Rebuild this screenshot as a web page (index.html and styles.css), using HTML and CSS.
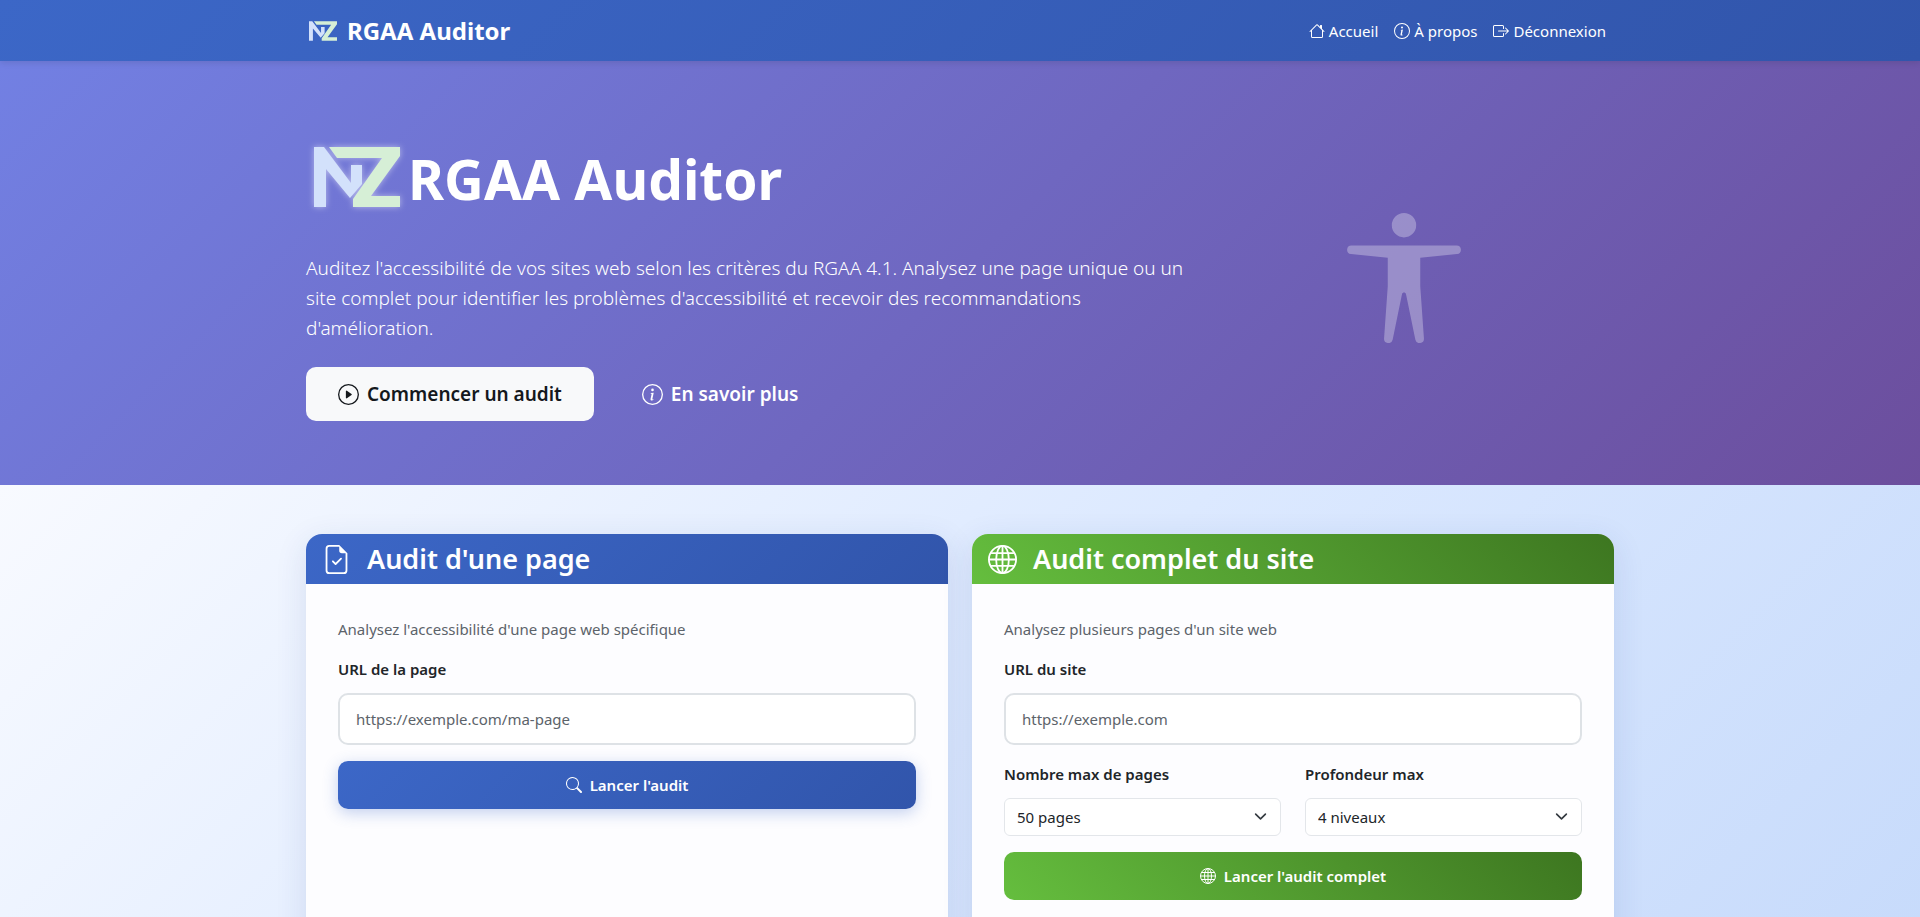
FILE: index.html
```html
<!DOCTYPE html>
<html lang="fr">
<head>
<meta charset="utf-8">
<title>RGAA Auditor</title>
<meta name="viewport" content="width=device-width, initial-scale=1">
<link rel="stylesheet" href="styles.css">
</head>
<body>
<svg class="sprite" aria-hidden="true">
  <symbol id="house" viewBox="0 0 16 16"><path d="M8.707 1.5a1 1 0 0 0-1.414 0L.646 8.146a.5.5 0 0 0 .708.708L2 8.207V13.5A1.5 1.5 0 0 0 3.5 15h9a1.5 1.5 0 0 0 1.5-1.5V8.207l.646.647a.5.5 0 0 0 .708-.708L13 5.793V2.5a.5.5 0 0 0-.5-.5h-1a.5.5 0 0 0-.5.5v1.293zM13 7.207V13.5a.5.5 0 0 1-.5.5h-9a.5.5 0 0 1-.5-.5V7.207l5-5z"/></symbol>
  <symbol id="info" viewBox="0 0 16 16"><path d="M8 15A7 7 0 1 1 8 1a7 7 0 0 1 0 14m0 1A8 8 0 1 0 8 0a8 8 0 0 0 0 16"/><path d="m8.93 6.588-2.29.287-.082.38.45.083c.294.07.352.176.288.469l-.738 3.468c-.194.897.105 1.319.808 1.319.545 0 1.178-.252 1.465-.598l.088-.416c-.2.176-.492.246-.686.246-.275 0-.375-.193-.304-.533zM9 4.5a1 1 0 1 1-2 0 1 1 0 0 1 2 0"/></symbol>
  <symbol id="logout" viewBox="0 0 16 16"><path d="M10 12.5a.5.5 0 0 1-.5.5h-8a.5.5 0 0 1-.5-.5v-9a.5.5 0 0 1 .5-.5h8a.5.5 0 0 1 .5.5v2a.5.5 0 0 0 1 0v-2A1.5 1.5 0 0 0 9.5 2h-8A1.5 1.5 0 0 0 0 3.5v9A1.5 1.5 0 0 0 1.5 14h8a1.5 1.5 0 0 0 1.5-1.5v-2a.5.5 0 0 0-1 0z"/><path d="M15.854 8.354a.5.5 0 0 0 0-.708l-3-3a.5.5 0 0 0-.708.708L14.293 7.5H5.5a.5.5 0 0 0 0 1h8.793l-2.147 2.146a.5.5 0 0 0 .708.708z"/></symbol>
  <symbol id="play" viewBox="0 0 16 16"><path d="M8 15A7 7 0 1 1 8 1a7 7 0 0 1 0 14m0 1A8 8 0 1 0 8 0a8 8 0 0 0 0 16"/><path d="M6.271 5.055a.5.5 0 0 1 .52.038l3.5 2.5a.5.5 0 0 1 0 .814l-3.5 2.5A.5.5 0 0 1 6 10.5v-5a.5.5 0 0 1 .271-.445"/></symbol>
  <symbol id="search" viewBox="0 0 16 16"><path d="M11.742 10.344a6.5 6.5 0 1 0-1.397 1.398h-.001q.044.06.098.115l3.85 3.85a1 1 0 0 0 1.415-1.414l-3.85-3.85a1 1 0 0 0-.115-.1zM12 6.5a5.5 5.5 0 1 1-11 0 5.5 5.5 0 0 1 11 0"/></symbol>
  <symbol id="file-check" viewBox="0 0 16 16"><path d="M10.854 7.854a.5.5 0 0 0-.708-.708L7.5 9.793 6.354 8.646a.5.5 0 1 0-.708.708l1.5 1.5a.5.5 0 0 0 .708 0z"/><path d="M14 14V4.5L9.5 0H4a2 2 0 0 0-2 2v12a2 2 0 0 0 2 2h8a2 2 0 0 0 2-2M9.5 3A1.5 1.5 0 0 0 11 4.5h2V14a1 1 0 0 1-1 1H4a1 1 0 0 1-1-1V2a1 1 0 0 1 1-1h5.5z"/></symbol>
  <symbol id="globe" viewBox="0 0 16 16"><g fill="none" stroke="currentColor"><circle cx="8" cy="8" r="7.5"/><ellipse cx="8" cy="8" rx="3.5" ry="7.5"/><path d="M8 .5v15M.5 8h15M1.7 4.5h12.6M1.7 11.5h12.6"/></g></symbol>
  <symbol id="person" viewBox="0 0 16 16"><path d="M9.5 1.5a1.5 1.5 0 1 1-3 0 1.5 1.5 0 0 1 3 0M6 5.5l-4.535-.442A.531.531 0 0 1 1.531 4H14.47a.531.531 0 0 1 .066 1.058L10 5.5V9l.452 6.42a.535.535 0 0 1-1.053.174L8.243 9.97c-.064-.252-.422-.252-.486 0l-1.156 5.624a.535.535 0 0 1-1.053-.174L6 9z"/></symbol>
  <symbol id="logo" viewBox="0 0 86 60"><path fill="#d3e1fb" d="M0 60V0h10l27 36V18h11v19L36 51 12 22v38z"/><path fill="#d6efd6" d="M15 0h71v9L57 49h29v11H39v-8L68 11H23z"/></symbol>
</svg>

<header class="navbar">
  <div class="container navbar-inner">
    <a class="brand" href="#"><svg class="brand-logo" aria-hidden="true"><use href="#logo"/></svg>RGAA Auditor</a>
    <nav class="nav">
      <a href="#"><svg class="icon" aria-hidden="true"><use href="#house"/></svg>Accueil</a>
      <a href="#"><svg class="icon" aria-hidden="true"><use href="#info"/></svg>À propos</a>
      <a href="#"><svg class="icon" aria-hidden="true"><use href="#logout"/></svg>Déconnexion</a>
    </nav>
  </div>
</header>

<section class="hero">
  <div class="container hero-inner">
    <div class="hero-text">
      <h1><svg class="hero-logo" aria-hidden="true"><use href="#logo"/></svg>RGAA Auditor</h1>
      <p class="lead">Auditez l'accessibilité de vos sites web selon les critères du RGAA 4.1. Analysez une page unique ou un site complet pour identifier les problèmes d'accessibilité et recevoir des recommandations d'amélioration.</p>
      <div class="hero-actions">
        <a class="btn-lg btn-light" href="#audit"><svg class="icon" aria-hidden="true"><use href="#play"/></svg>Commencer un audit</a>
        <a class="btn-lg" href="#"><svg class="icon" aria-hidden="true"><use href="#info"/></svg>En savoir plus</a>
      </div>
    </div>
    <div class="hero-art"><svg class="person" aria-hidden="true"><use href="#person"/></svg></div>
  </div>
</section>

<main class="page" id="audit">
  <div class="container cards">
    <section class="card">
      <h2 class="card-head blue"><svg class="icon" aria-hidden="true"><use href="#file-check"/></svg>Audit d'une page</h2>
      <form class="card-body">
        <p class="hint">Analysez l'accessibilité d'une page web spécifique</p>
        <label for="page-url">URL de la page</label>
        <input class="field" id="page-url" type="url" placeholder="https://exemple.com/ma-page">
        <button class="submit blue glow" type="button"><svg class="icon" aria-hidden="true"><use href="#search"/></svg>Lancer l'audit</button>
      </form>
    </section>
    <section class="card">
      <h2 class="card-head green"><svg class="icon" aria-hidden="true"><use href="#globe"/></svg>Audit complet du site</h2>
      <form class="card-body">
        <p class="hint">Analysez plusieurs pages d'un site web</p>
        <label for="site-url">URL du site</label>
        <input class="field" id="site-url" type="url" placeholder="https://exemple.com">
        <div class="pair">
          <div>
            <label for="max-pages">Nombre max de pages</label>
            <div class="select-wrap"><select id="max-pages"><option>50 pages</option></select><svg class="chevron" viewBox="0 0 16 16" aria-hidden="true"><path d="m2 5 6 6 6-6"/></svg></div>
          </div>
          <div>
            <label for="depth">Profondeur max</label>
            <div class="select-wrap"><select id="depth"><option>4 niveaux</option></select><svg class="chevron" viewBox="0 0 16 16" aria-hidden="true"><path d="m2 5 6 6 6-6"/></svg></div>
          </div>
        </div>
        <button class="submit green" type="button"><svg class="icon" aria-hidden="true"><use href="#globe"/></svg>Lancer l'audit complet</button>
      </form>
    </section>
  </div>
</main>
</body>
</html>
```
FILE: styles.css
```css
* { box-sizing: border-box; }

body {
  margin: 0;
  font: 15px/24px "Noto Sans", "Open Sans", sans-serif;
  color: #212529;
  background: #c8dcfb;
}

.sprite { display: none; }
h1, h2, p { margin: 0; }
a { color: inherit; text-decoration: none; }
button, input, select { font: inherit; }

.container {
  max-width: 1332px;
  margin: 0 auto;
  padding: 0 12px;
}

.icon {
  width: 16px;
  height: 16px;
  fill: currentColor;
  flex: none;
}

.blue { background: linear-gradient(135deg, #3c67c7, #3155ab); }
.green { background: linear-gradient(45deg, #65be3e, #3d7620); }

/* Navigation */
.navbar {
  background: linear-gradient(135deg, #3c67c7, #3155ab);
  color: #fff;
  position: relative;
  box-shadow: 0 2px 6px rgba(0, 0, 0, 0.1);
}

.navbar-inner {
  display: flex;
  align-items: center;
  justify-content: space-between;
  min-height: 61px;
}

.brand {
  display: flex;
  align-items: center;
  gap: 10px;
  padding-left: 3px;
  font-size: 24px;
  font-weight: 700;
}

.brand-logo { width: 28px; height: 20px; }

.nav {
  display: flex;
  gap: 16px;
  padding-right: 8px;
}

.nav a {
  display: flex;
  align-items: center;
  gap: 4px;
}

/* Hero */
.hero {
  color: #fff;
  background: linear-gradient(135deg, #7280e3, #6c4e9d);
  padding: 64px 0;
}

.hero-inner {
  display: grid;
  grid-template-columns: 1fr 420px;
  align-items: center;
}

h1 {
  display: flex;
  align-items: center;
  gap: 8px;
  padding-left: 8px;
  min-height: 108px;
  margin-bottom: 20px;
  font-size: 55px;
  line-height: 68px;
  font-weight: 700;
}

.hero-logo {
  width: 86px;
  height: 60px;
  margin-top: -4px;
  overflow: visible;
  filter: drop-shadow(0 0 3px rgba(255, 255, 255, 0.5));
}

.lead {
  margin-bottom: 24px;
  font-size: 19px;
  line-height: 30px;
  font-weight: 300;
}

.hero-actions { display: flex; gap: 16px; }

.btn-lg {
  display: flex;
  align-items: center;
  gap: 8px;
  padding: 12px 32px;
  border-radius: 10px;
  font-size: 19px;
  line-height: 30px;
  font-weight: 600;
}

.btn-lg .icon { width: 21px; height: 21px; }
.btn-light { background: #f8f9fa; color: #14181c; }

.hero-art {
  display: flex;
  justify-content: center;
  padding-top: 10px;
}

.person { width: 130px; height: 130px; fill: rgba(255, 255, 255, 0.3); }

/* Cards */
.page {
  background: linear-gradient(135deg, #f8faff 0%, #dce9ff 50%, #c6dafb 100%);
}

.cards {
  display: grid;
  grid-template-columns: 1fr 1fr;
  gap: 24px;
  padding-top: 49px;
  padding-bottom: 48px;
}

.card {
  background: #fdfdff;
  border-radius: 16px;
  box-shadow: 0 8px 32px rgba(31, 60, 135, 0.12);
  overflow: hidden;
}

.card-head {
  display: flex;
  align-items: center;
  gap: 16px;
  padding: 8px 16px;
  color: #fff;
  font-size: 27px;
  line-height: 34px;
  font-weight: 600;
}

.card-head .icon { width: 29px; height: 29px; }

.card-body { padding: 33px 32px 48px; }
.hint { color: #5c636a; margin-bottom: 16px; }

label {
  display: block;
  margin-bottom: 12px;
  font-weight: 600;
}

.field {
  display: block;
  width: 100%;
  padding: 12px 16px;
  border: 2px solid #dee2e6;
  border-radius: 10px;
  background: #fff;
  color: #212529;
}

.field::placeholder { color: #5c636a; opacity: 1; }

.pair {
  display: grid;
  grid-template-columns: 1fr 1fr;
  gap: 24px;
  margin-top: 17px;
}

.select-wrap { position: relative; }

select {
  display: block;
  width: 100%;
  padding: 6px 36px 6px 12px;
  border: 1px solid #e3e6ea;
  border-radius: 6px;
  background: #fff;
  color: #212529;
  appearance: none;
}

.chevron {
  position: absolute;
  right: 14px;
  top: 12px;
  width: 13px;
  height: 13px;
  fill: none;
  stroke: #343a40;
  stroke-width: 2;
  stroke-linecap: round;
  stroke-linejoin: round;
  pointer-events: none;
}

.submit {
  display: flex;
  align-items: center;
  justify-content: center;
  gap: 8px;
  width: 100%;
  margin-top: 16px;
  padding: 12px;
  border: 0;
  border-radius: 10px;
  color: #fff;
  font-weight: 600;
}

.glow { box-shadow: 0 4px 15px rgba(60, 103, 199, 0.3); }
```
